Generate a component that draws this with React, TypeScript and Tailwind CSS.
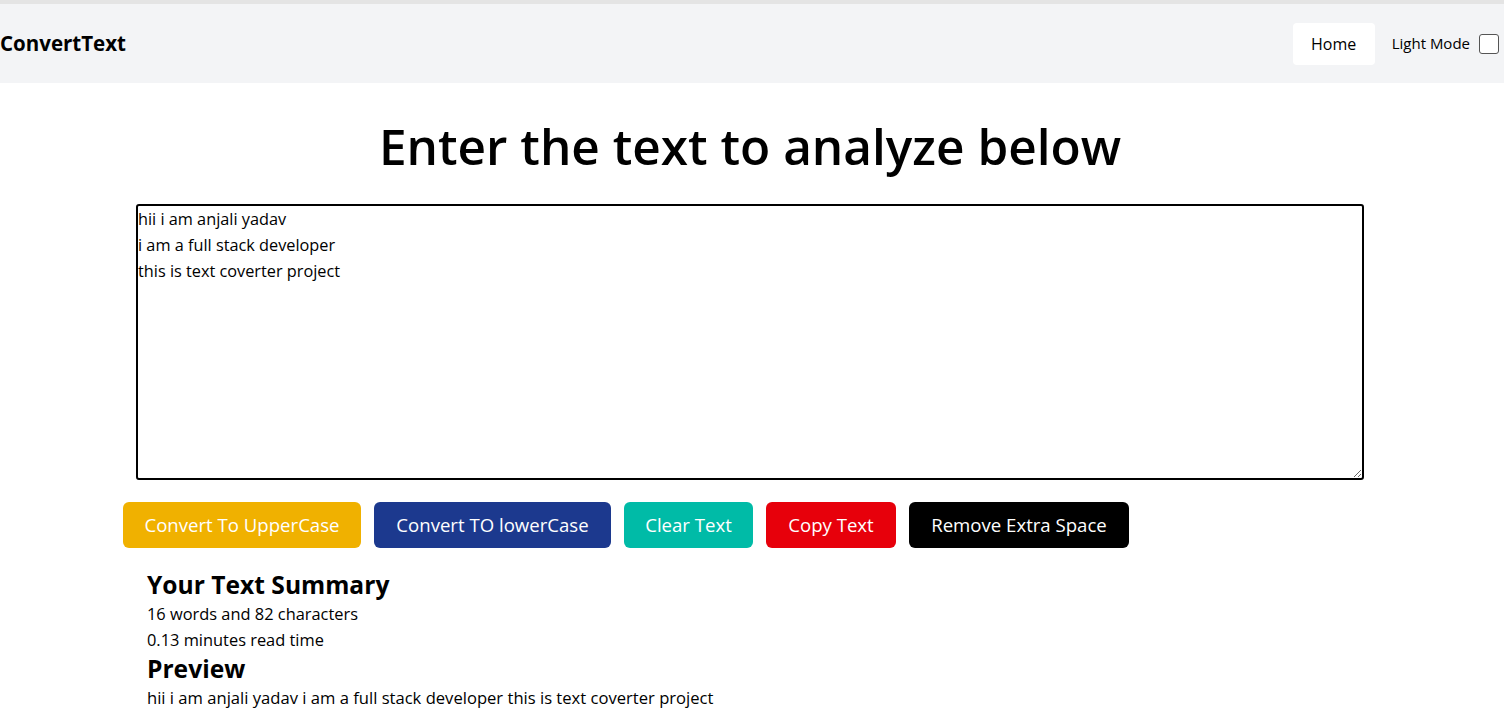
import { useState } from 'react'

const font = { fontFamily: '"Open Sans", "Noto Sans", sans-serif' }

function Navbar() {
  return (
    <nav className="flex h-[83px] items-center justify-between border-t-4 border-[#e4e4e4] bg-gray-100">
      <a className="text-[20.5px] font-bold text-black">ConvertText</a>
      <div className="flex items-center">
        <a className="mr-[17px] flex h-[42px] w-[82px] items-center justify-center rounded bg-white text-[16px] text-black">
          Home
        </a>
        <label className="flex items-center text-[15px] text-black">
          Light Mode
          <span className="ml-[9px] mr-[5px] block h-[20px] w-[20px] rounded-[3px] border border-[#555] bg-white" />
        </label>
      </div>
    </nav>
  )
}

export default function App() {
  const [text] = useState(
    'hii i am anjali yadav\ni am a full stack developer\nthis is text coverter project'
  )
  const buttons = [
    { label: 'Convert To UpperCase', cls: 'bg-yellow-500 w-[238px]' },
    { label: 'Convert TO lowerCase', cls: 'bg-blue-900 w-[237px]' },
    { label: 'Clear Text', cls: 'bg-teal-500 w-[129px]' },
    { label: 'Copy Text', cls: 'bg-red-600 w-[130px]' },
    { label: 'Remove Extra Space', cls: 'bg-black w-[220px]' },
  ]

  return (
    <div className="min-h-screen bg-white text-black" style={font}>
      <Navbar />
      <main className="ml-[136px] w-[1228px]">
        <h1 className="mt-[28px] text-center text-[49.5px] font-semibold leading-[70px]">
          Enter the text to analyze below
        </h1>
        <textarea
          className="mt-[23px] block h-[276px] w-full resize-y rounded-[3px] border-2 border-black px-0 py-0 text-[16.3px] leading-[26px] outline-none"
          defaultValue={text}
          spellCheck={false}
        />
        <div className="-ml-[13px] mt-[22px] flex gap-[13px]">
          {buttons.map((b) => (
            <button
              key={b.label}
              className={`${b.cls} h-[46px] rounded-md text-[18.6px] text-white`}
            >
              {b.label}
            </button>
          ))}
        </div>
        <section className="ml-[11px] mt-[21px]">
          <h2 className="text-[24.6px] font-bold leading-[32px]">Your Text Summary</h2>
          <p className="text-[16.4px] leading-[26px]">16 words and 82 characters</p>
          <p className="text-[16.4px] leading-[26px]">0.13 minutes read time</p>
          <h2 className="text-[24.6px] font-bold leading-[32px]">Preview</h2>
          <p className="text-[16.6px] leading-[26px]">{text.replace(/\n/g, ' ')}</p>
        </section>
      </main>
    </div>
  )
}
